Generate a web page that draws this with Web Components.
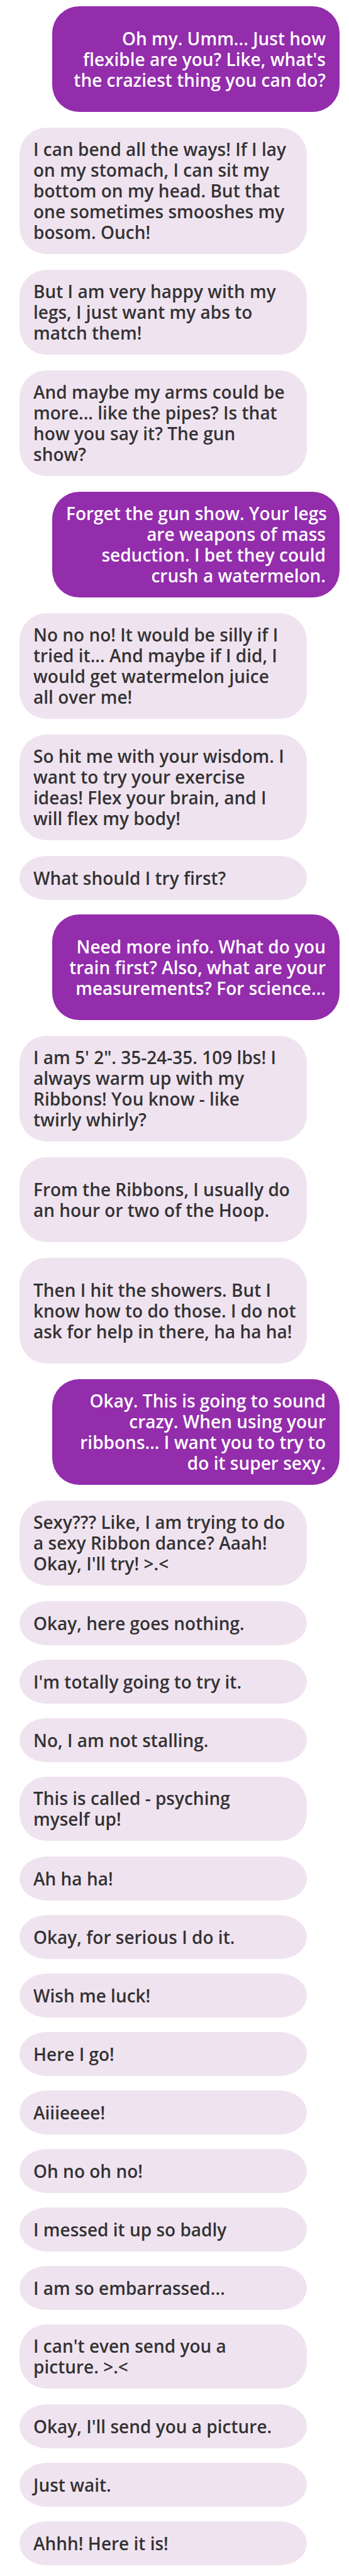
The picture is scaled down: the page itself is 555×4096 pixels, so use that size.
<!DOCTYPE html>
<html lang="en">
<head>
<meta charset="utf-8">
<meta name="viewport" content="width=device-width, initial-scale=1">
<title>Chat</title>
<style>
  body { margin: 0; background: #fff; }
</style>
</head>
<body>
<chat-thread>
  <chat-message from="me" rows="4">Oh my. Umm... Just how<br>flexible are you? Like, what's<br>the craziest thing you can do?</chat-message>
  <chat-message>I can bend all the ways! If I lay<br>on my stomach, I can sit my<br>bottom on my head. But that<br>one sometimes smooshes my<br>bosom. Ouch!</chat-message>
  <chat-message>But I am very happy with my<br>legs, I just want my abs to<br>match them!</chat-message>
  <chat-message>And maybe my arms could be<br>more... like the pipes? Is that<br>how you say it? The gun<br>show?</chat-message>
  <chat-message from="me">Forget the gun show. Your legs<br>are weapons of mass<br>seduction. I bet they could<br>crush a watermelon.</chat-message>
  <chat-message>No no no! It would be silly if I<br>tried it... And maybe if I did, I<br>would get watermelon juice<br>all over me!</chat-message>
  <chat-message>So hit me with your wisdom. I<br>want to try your exercise<br>ideas! Flex your brain, and I<br>will flex my body!</chat-message>
  <chat-message short>What should I try first?</chat-message>
  <chat-message from="me" rows="4">Need more info. What do you<br>train first? Also, what are your<br>measurements? For science...</chat-message>
  <chat-message>I am 5' 2". 35-24-35. 109 lbs! I<br>always warm up with my<br>Ribbons! You know - like<br>twirly whirly?</chat-message>
  <chat-message rows="3">From the Ribbons, I usually do<br>an hour or two of the Hoop.</chat-message>
  <chat-message rows="4">Then I hit the showers. But I<br>know how to do those. I do not<br>ask for help in there, ha ha ha!</chat-message>
  <chat-message from="me">Okay. This is going to sound<br>crazy. When using your<br>ribbons... I want you to try to<br>do it super sexy.</chat-message>
  <chat-message>Sexy??? Like, I am trying to do<br>a sexy Ribbon dance? Aaah!<br>Okay, I'll try! &gt;.&lt;</chat-message>
  <chat-message short>Okay, here goes nothing.</chat-message>
  <chat-message short>I'm totally going to try it.</chat-message>
  <chat-message short>No, I am not stalling.</chat-message>
  <chat-message>This is called - psyching<br>myself up!</chat-message>
  <chat-message short>Ah ha ha!</chat-message>
  <chat-message short>Okay, for serious I do it.</chat-message>
  <chat-message short>Wish me luck!</chat-message>
  <chat-message short>Here I go!</chat-message>
  <chat-message short>Aiiieeee!</chat-message>
  <chat-message short>Oh no oh no!</chat-message>
  <chat-message short>I messed it up so badly</chat-message>
  <chat-message short>I am so embarrassed...</chat-message>
  <chat-message>I can't even send you a<br>picture. &gt;.&lt;</chat-message>
  <chat-message short>Okay, I'll send you a picture.</chat-message>
  <chat-message short>Just wait.</chat-message>
  <chat-message short>Ahhh! Here it is!</chat-message>
</chat-thread>

<template id="thread-template">
  <style>
    :host {
      display: block;
      padding: 10px 15px 0 31px;
      font: 600 28px/33px "Open Sans", "Noto Sans", sans-serif;
      color: #333;
    }
    section { display: flex; flex-direction: column; }
  </style>
  <section role="log" aria-label="Conversation"><slot></slot></section>
</template>

<template id="message-template">
  <style>
    :host {
      display: flex;
      flex-direction: column;
      justify-content: center;
      box-sizing: border-box;
      margin: 0 52px 25px 0;
      padding: 18px 22px;
      border-radius: 43px;
      background: #f0e3f0;
      white-space: nowrap;
    }
    :host([from="me"]) {
      margin: 0 0 25px 52px;
      background: #932dac;
      color: #fff;
      text-align: right;
    }
    :host([rows="3"]) { min-height: 135px; }
    :host([rows="4"]) { min-height: 168px; }
    :host([short]) { min-height: 70px; margin-bottom: 23px; border-radius: 43px / 50%; }
    p { margin: 0; }
  </style>
  <p><slot></slot></p>
</template>

<script>
  class ChatThread extends HTMLElement {
    constructor() {
      super();
      this.attachShadow({ mode: 'open' })
        .append(document.getElementById('thread-template').content.cloneNode(true));
    }
  }
  class ChatMessage extends HTMLElement {
    constructor() {
      super();
      this.attachShadow({ mode: 'open' })
        .append(document.getElementById('message-template').content.cloneNode(true));
    }
  }
  customElements.define('chat-thread', ChatThread);
  customElements.define('chat-message', ChatMessage);
</script>
</body>
</html>
